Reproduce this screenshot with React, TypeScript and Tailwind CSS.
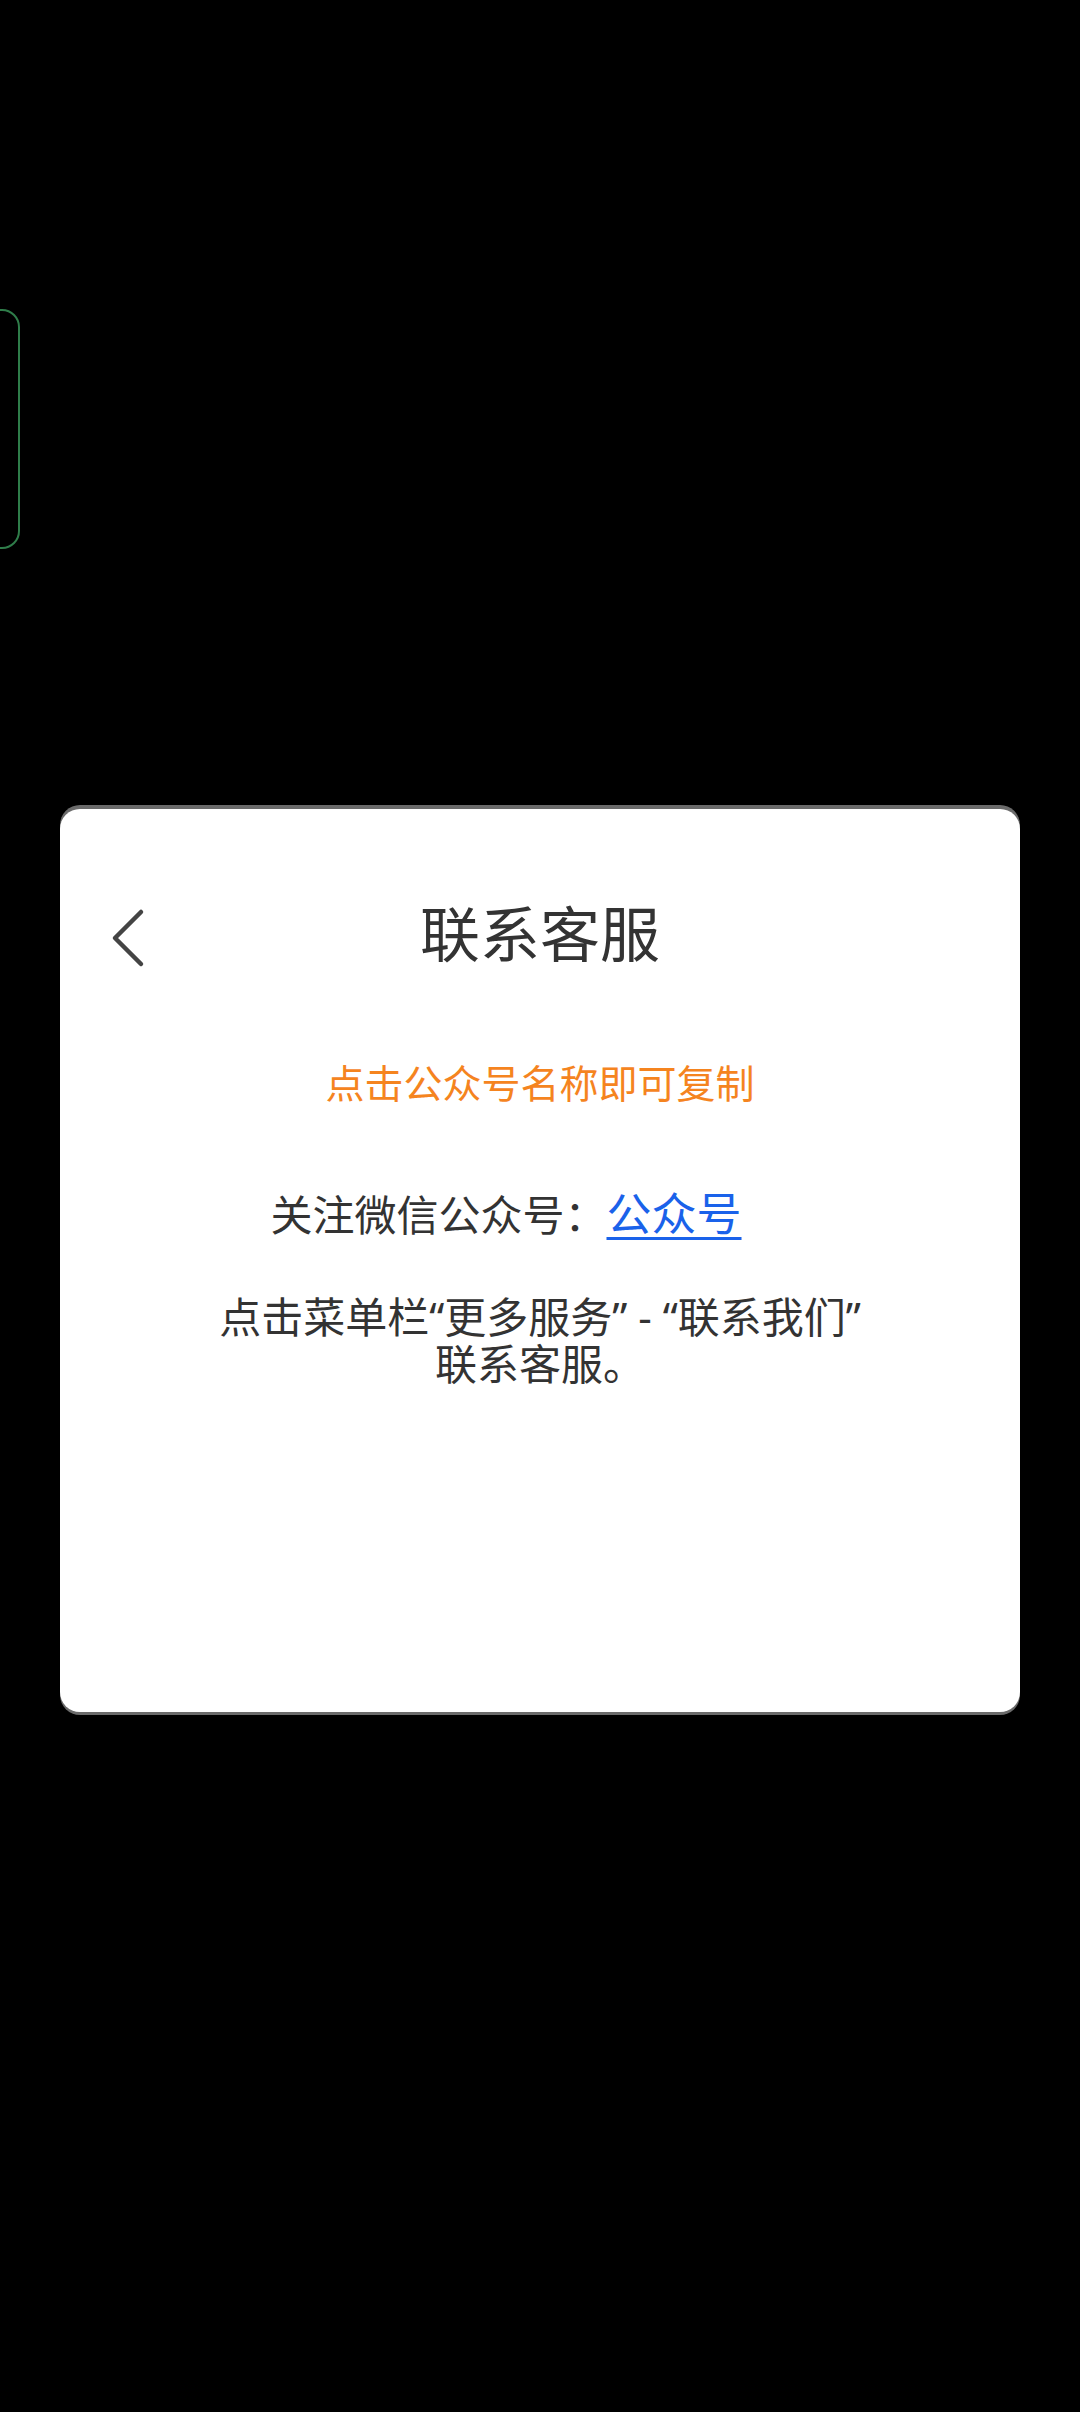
import React from "react";

const font = { fontFamily: '"Noto Sans", "Noto Sans CJK SC", sans-serif' };

const BackIcon = () => (
  <svg width="40" height="64" viewBox="0 0 40 64" fill="none">
    <path
      d="M33 6 L7 32 L33 58"
      stroke="#444444"
      strokeWidth="4.5"
      strokeLinecap="round"
      strokeLinejoin="round"
    />
  </svg>
);

const ContactCard = () => {
  return (
    <div className="w-[960px] h-[903px] bg-white rounded-[20px] shadow-[0_-4px_0_0_#6b6b6b,0_3px_0_0_#6b6b6b] flex flex-col items-center text-[#333333]">
      {/* 标题栏 */}
      <div className="relative w-full mt-[85px] h-[80px] flex items-center justify-center">
        <button className="absolute left-[48px] top-[12px]">
          <BackIcon />
        </button>
        <h2 className="text-[60px] leading-none">联系客服</h2>
      </div>

      <p className="mt-[81px] text-[39px] leading-[56px] text-[#f5841f]">点击公众号名称即可复制</p>

      <p className="mt-[73px] pr-[68px] text-[42px] leading-[60px] flex items-baseline">
        <span>关注微信公众号：</span>
        <a className="text-[45px] text-[#1a62ea] underline underline-offset-[6px] decoration-[3px] cursor-pointer">
          公众号
        </a>
      </p>

      <p className="mt-[48px] text-[42px] leading-[47px] text-center">
        点击菜单栏“更多服务” - “联系我们”
        <br />
        联系客服。
      </p>
    </div>
  );
};

export default function App() {
  return (
    <div className="relative min-h-[2412px] w-[1080px] bg-black overflow-hidden pt-[809px] px-[60px]" style={font}>
      {/* 悬浮侧边按钮（大部分在屏幕外） */}
      <div className="absolute left-[-40px] top-[309px] w-[60px] h-[240px] rounded-[18px] border-2 border-[#2f7d4a]" />
      <ContactCard />
    </div>
  );
}
